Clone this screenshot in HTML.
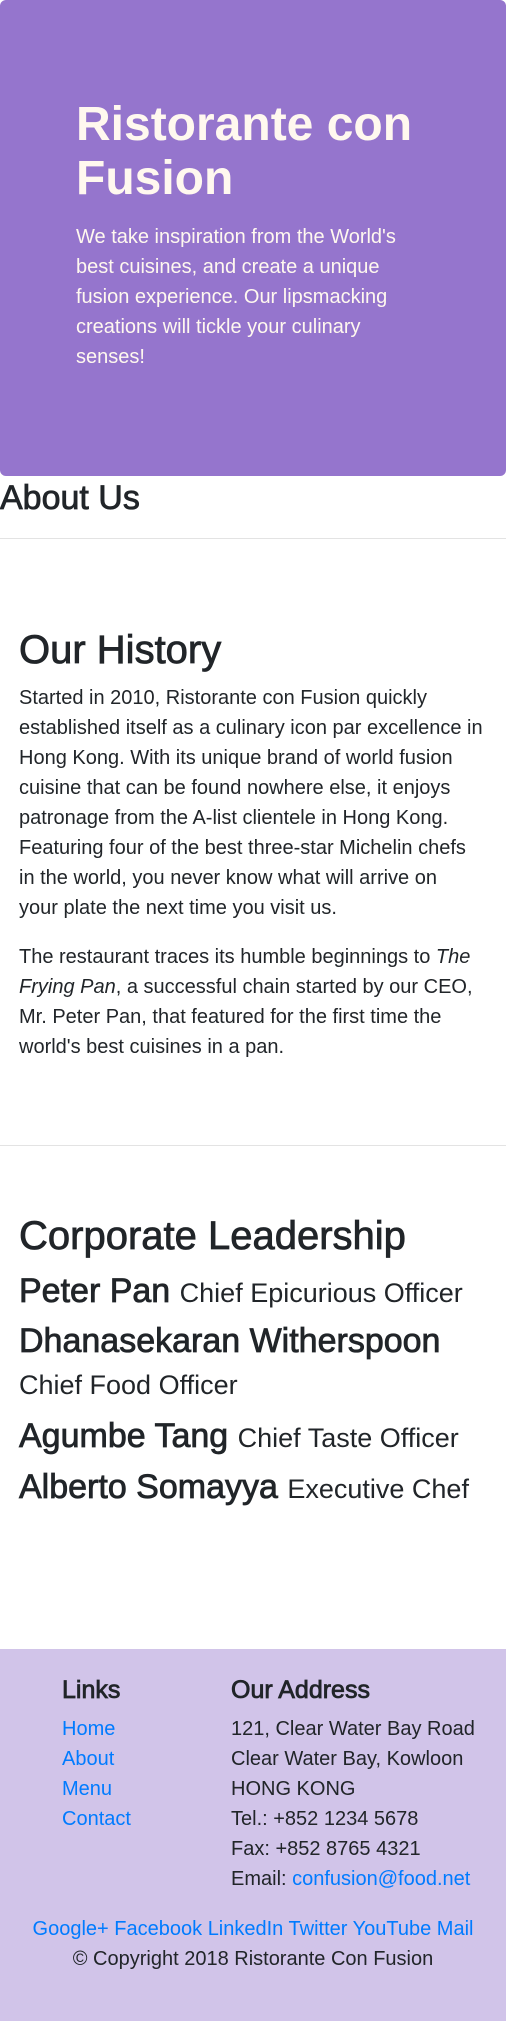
<!DOCTYPE html>
<html><head><meta charset="utf-8"><style>
*{margin:0;padding:0;box-sizing:border-box}
html,body{width:506px;height:2021px;background:#fff;overflow:hidden}
body{position:relative;font-family:"Liberation Sans",Arial,sans-serif;color:#212529}
.a{position:absolute;white-space:nowrap}
.jum{position:absolute;left:0;top:0;width:506px;height:476px;background:#9575cd;border-radius:6px}
.h{-webkit-text-stroke:0.8px currentColor}
.p{font-size:20px;line-height:30px}
.foot{position:absolute;left:0;top:1649px;width:506px;height:372px;background:#d1c4e9}
a{color:#007bff;text-decoration:none}
hr{position:absolute;left:0;width:506px;border:0;border-top:1px solid #e3e3e3;height:0}
</style></head><body>
<div class="jum"></div>
<div class="a" style="left:76px;top:98px;font-size:48px;line-height:54px;color:#fff8ef;font-weight:bold">Ristorante con<br>Fusion</div>
<div class="a p" style="left:76px;top:222px;color:#fff8ef">We take inspiration from the World's<br>best cuisines, and create a unique<br>fusion experience. Our lipsmacking<br>creations will tickle your culinary<br>senses!</div>

<div class="a h" style="left:0;top:477px;font-size:34px;line-height:42px">About Us</div>
<hr style="top:538px">
<div class="a h" style="left:19px;top:626px;font-size:40px;line-height:48px">Our History</div>
<div class="a p" style="left:19px;top:683px">Started in 2010, Ristorante con Fusion quickly<br>established itself as a culinary icon par excellence in<br>Hong Kong. With its unique brand of world fusion<br>cuisine that can be found nowhere else, it enjoys<br>patronage from the A-list clientele in Hong Kong.<br>Featuring four of the best three-star Michelin chefs<br>in the world, you never know what will arrive on<br>your plate the next time you visit us.</div>
<div class="a p" style="left:19px;top:942px">The restaurant traces its humble beginnings to <i>The</i><br><i>Frying Pan</i>, a successful chain started by our CEO,<br>Mr. Peter Pan, that featured for the first time the<br>world's best cuisines in a pan.</div>
<hr style="top:1145px">
<div class="a h" style="left:19px;top:1212px;font-size:40px;line-height:48px">Corporate Leadership</div>
<div class="a" style="left:19px;top:1270px;font-size:34px;line-height:42px"><span class="h">Peter Pan</span> <span style="font-size:27px">Chief Epicurious Officer</span></div>
<div class="a h" style="left:19px;top:1320px;font-size:34px;line-height:42px">Dhanasekaran Witherspoon</div>
<div class="a" style="left:19px;top:1364px;font-size:27px;line-height:42px">Chief Food Officer</div>
<div class="a" style="left:19px;top:1415px;font-size:34px;line-height:42px"><span class="h">Agumbe Tang</span> <span style="font-size:27px">Chief Taste Officer</span></div>
<div class="a" style="left:19px;top:1466px;font-size:34px;line-height:42px"><span class="h">Alberto Somayya</span> <span style="font-size:27px">Executive Chef</span></div>

<div class="foot"></div>
<div class="a h" style="left:62px;top:1675px;font-size:25px;line-height:30px">Links</div>
<div class="a h" style="left:231px;top:1675px;font-size:25px;line-height:30px">Our Address</div>
<div class="a p" style="left:62px;top:1714px"><a>Home</a><br><a>About</a><br><a>Menu</a><br><a>Contact</a></div>
<div class="a p" style="left:231px;top:1714px">121, Clear Water Bay Road<br>Clear Water Bay, Kowloon<br>HONG KONG<br>Tel.: +852 1234 5678<br>Fax: +852 8765 4321<br>Email: <a>confusion@food.net</a></div>
<div class="a p" style="left:0;width:506px;text-align:center;top:1914px"><a>Google+</a> <a>Facebook</a> <a>LinkedIn</a> <a>Twitter</a> <a>YouTube</a> <a>Mail</a></div>
<div class="a p" style="left:0;width:506px;text-align:center;top:1944px">© Copyright 2018 Ristorante Con Fusion</div>
</body></html>
